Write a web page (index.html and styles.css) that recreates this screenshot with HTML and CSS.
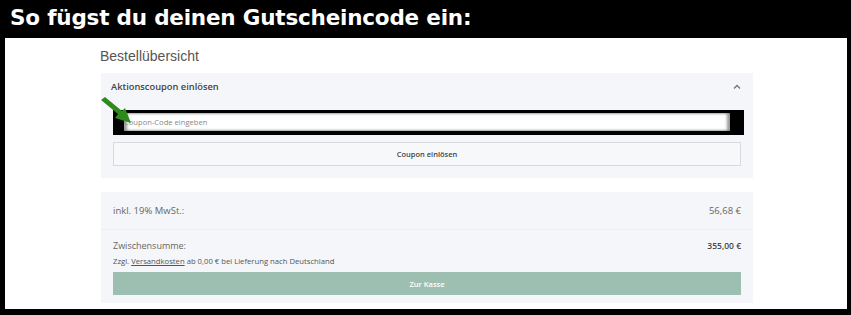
FILE: index.html
```html
<!DOCTYPE html>
<html lang="de">
<head>
  <meta charset="UTF-8">
  <title>Gutscheincode</title>
  <link rel="stylesheet" href="styles.css">
</head>
<body>
<div class="frame">
  <h1 class="title">So fügst du deinen Gutscheincode ein:</h1>
  <div class="sheet">
    <div class="content">
      <h2 class="heading">Bestellübersicht</h2>

      <div class="card coupon">
        <div class="coupon-head">
          <span>Aktionscoupon einlösen</span>
          <svg class="chevron" width="8" height="6" viewBox="0 0 8 6"><path d="M1 4.5 L4 1.5 L7 4.5" fill="none" stroke="#777" stroke-width="1.4"/></svg>
        </div>
        <div class="input-wrap">
          <div class="input">Coupon-Code eingeben</div>
          <svg class="arrow" width="40" height="34" viewBox="0 0 40 34">
            <path d="M3 3 L20 17 L17 21 L33 26 L27 11 L24 14 L7 0 Z" fill="#2f8a1e"/>
          </svg>
        </div>
        <button class="btn-coupon">Coupon einlösen</button>
      </div>

      <div class="card summary">
        <div class="row tax">
          <span>inkl. 19% MwSt.:</span>
          <span>56,68 €</span>
        </div>
        <div class="subtotal">
          <div class="row">
            <span>Zwischensumme:</span>
            <span class="strong">355,00 €</span>
          </div>
          <p class="shipping">Zzgl. <u>Versandkosten</u> ab 0,00 € bei Lieferung nach Deutschland</p>
        </div>
        <button class="btn-checkout">Zur Kasse</button>
      </div>
    </div>
  </div>
</div>
</body>
</html>
```

FILE: styles.css
```css
body {
  margin: 0;
  background-color: #000;
  font-family: "Open Sans", sans-serif;
}

.frame {
  width: 851px;
  height: 315px;
  background-color: #000;
  padding: 0 4px 6px 5px;
  box-sizing: border-box;
  display: flex;
  flex-direction: column;
}

.title {
  margin: 0;
  height: 38px;
  padding-left: 5px;
  font-family: "DejaVu Sans", sans-serif;
  font-weight: bold;
  font-size: 21.5px;
  letter-spacing: -0.2px;
  line-height: 36px;
  color: #fff;
}

.sheet {
  flex: 1;
  background-color: #fff;
}

.content {
  width: 652px;
  margin-left: 96px;
}

.heading {
  margin: 10px 0 8px -1px;
  font-family: "Liberation Sans", Arial, sans-serif;
  font-weight: normal;
  font-size: 14px;
  line-height: 17px;
  color: #555;
}

.card {
  background-color: #f5f6f9;
  padding: 0 12px 0 12px;
}

.coupon {
  height: 105px;
}

.coupon-head {
  display: flex;
  justify-content: space-between;
  align-items: center;
  height: 27px;
  margin-left: -2px;
  font-size: 9.3px;
  font-weight: 600;
  color: #444;
}

.input-wrap {
  position: relative;
  margin-top: 10px;
}

.input {
  height: 18px;
  margin-right: -3px;
  border-top: 3px solid #000;
  border-bottom: 4px solid #000;
  border-left: 11px solid #000;
  border-right: 14px solid #000;
  background-color: #fff;
  font-size: 7.6px;
  line-height: 19px;
  color: #888;
  box-shadow: inset 3px 0 3px rgba(0,0,0,0.4), inset -3px 0 3px rgba(0,0,0,0.4);
}

.arrow {
  position: absolute;
  left: -15px;
  top: -13px;
}

.btn-coupon {
  display: block;
  width: 100%;
  height: 24px;
  margin-top: 7px;
  background-color: #f7f8fa;
  border: 1px solid #d8dadd;
  font-family: "Open Sans", sans-serif;
  font-size: 7.5px;
  font-weight: 600;
  color: #444;
}

.summary {
  margin-top: 14px;
  height: 111px;
}

.row {
  display: flex;
  justify-content: space-between;
  align-items: center;
  font-size: 9px;
  color: #666;
}

.tax {
  height: 37px;
  border-bottom: 1px solid #eceef1;
  margin: 0 -12px;
  padding: 0 12px;
  font-size: 9.5px;
}

.subtotal {
  padding-top: 9px;
}

.strong {
  font-weight: 600;
  color: #444;
  font-size: 8.5px;
}

.shipping {
  margin: 4px 0 0 0;
  font-size: 7.7px;
  color: #555;
}

.btn-checkout {
  display: block;
  width: 100%;
  height: 23px;
  margin-top: 6px;
  background-color: #9dbfb1;
  border: none;
  font-family: "Open Sans", sans-serif;
  font-size: 7.5px;
  font-weight: 600;
  color: #fff;
}
```
